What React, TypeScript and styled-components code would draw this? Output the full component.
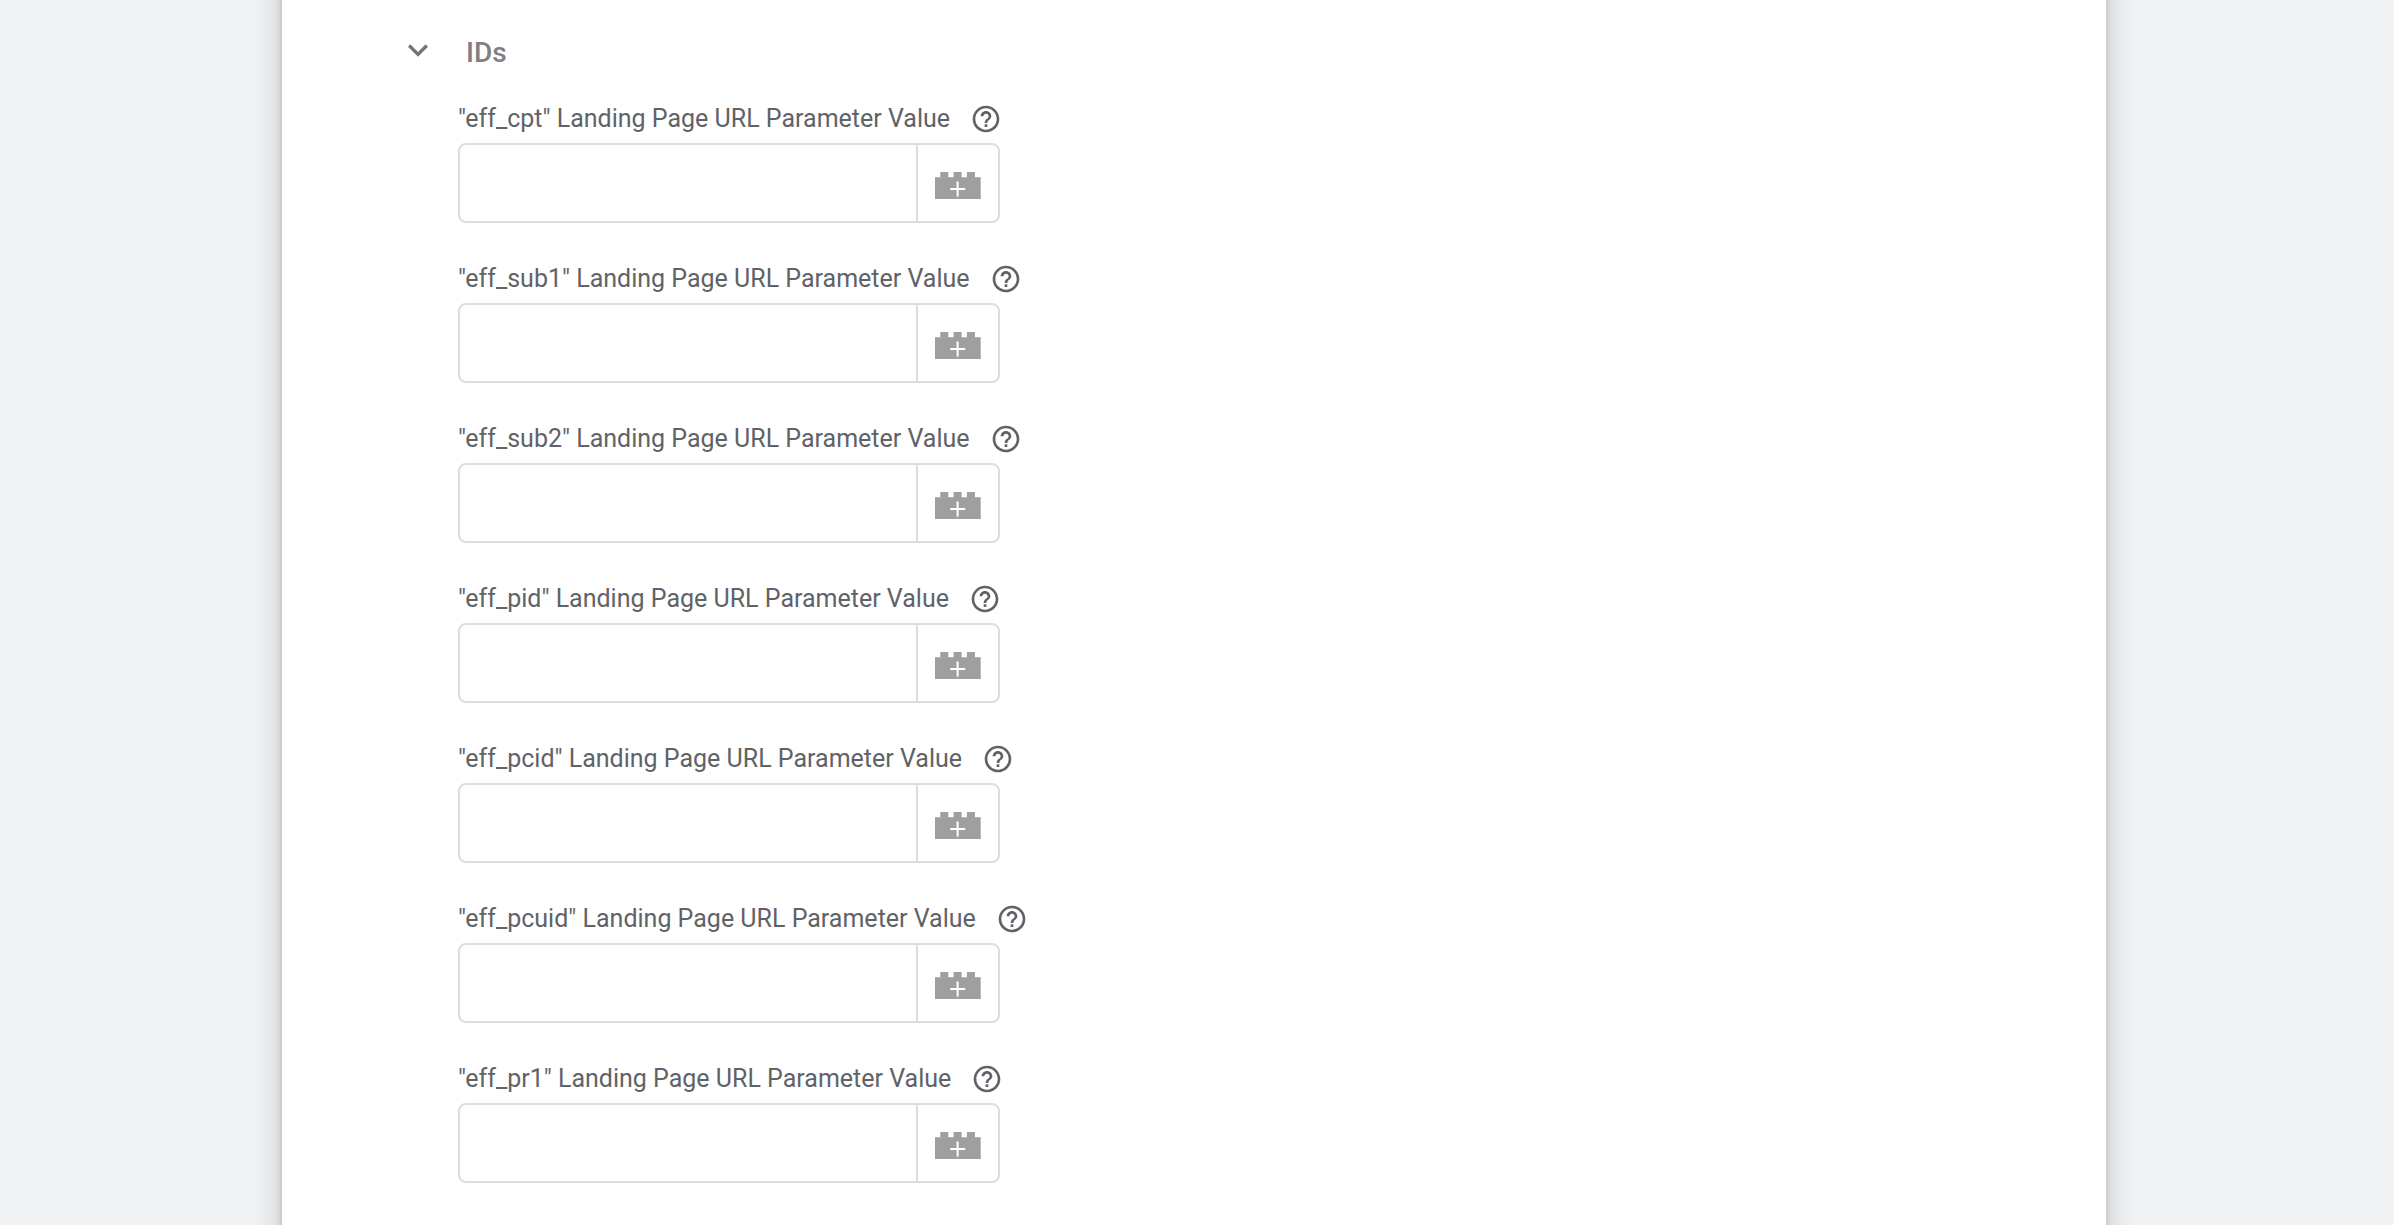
import React from "react";
import styled, { createGlobalStyle } from "styled-components";

const GlobalStyle = createGlobalStyle`
  *, *::before, *::after { box-sizing: border-box; }
  body {
    margin: 0;
    background: #f1f3f4;
    font-family: Roboto, "Liberation Sans", sans-serif;
    color: #5f6368;
  }
`;

const Page = styled.div`
  display: flex;
  min-height: 100vh;
  padding: 0 288px 0 282px;
  overflow: hidden;
`;

/* The panel runs past the top and bottom edges so its shadow stays even. */
const Panel = styled.main`
  flex: 1;
  min-width: 0;
  margin: -64px 0;
  padding: 97px 116px 104px;
  background: #fff;
  box-shadow: 0 0 6px rgba(0, 0, 0, 0.16), 0 0 32px rgba(0, 0, 0, 0.2);
`;

const SectionHeader = styled.header`
  display: flex;
  align-items: center;
  gap: 28px;
  height: 40px;
`;

const IconButton = styled.button`
  display: flex;
  align-items: center;
  justify-content: center;
  flex: none;
  padding: 0;
  border: 0;
  background: none;
  color: inherit;
  cursor: pointer;
`;

const CollapseButton = styled(IconButton)`
  color: #757575;
`;

const SectionTitle = styled.h2`
  margin: 0;
  font-size: 28px;
  line-height: 40px;
  font-weight: 500;
  color: #7f8083;
`;

const FieldList = styled.div`
  display: flex;
  flex-direction: column;
  gap: 40px;
  padding: 30px 0 0 60px;
`;

const Field = styled.div`
  display: flex;
  flex-direction: column;
  gap: 8px;
`;

const LabelRow = styled.div`
  display: flex;
  align-items: center;
  gap: 20px;
`;

const Label = styled.label`
  font-size: 25px;
  line-height: 32px;
`;

const InputGroup = styled.div`
  display: flex;
  width: 100%;
  max-width: 542px;
  height: 80px;
  border: 2px solid #dcdddf;
  border-radius: 8px;
  overflow: hidden;
`;

const TextInput = styled.input`
  flex: 1;
  min-width: 0;
  padding: 0 16px;
  border: 0;
  outline: 0;
  background: none;
  font: inherit;
  font-size: 25px;
`;

const VariableButton = styled(IconButton)`
  width: 82px;
  border-left: 2px solid #dcdddf;
`;

const ChevronIcon = () => (
  <svg width="40" height="40" viewBox="0 1.8 24 24" fill="currentColor" aria-hidden="true">
    <path d="M16.59 8.59 12 13.17 7.41 8.59 6 10l6 6 6-6z" />
  </svg>
);

const HelpIcon = () => (
  <svg width="32" height="32" viewBox="0 0 24 24" fill="currentColor" aria-hidden="true">
    <path d="M11 18h2v-2h-2v2zm1-16C6.48 2 2 6.48 2 12s4.48 10 10 10 10-4.48 10-10S17.52 2 12 2zm0 18c-4.41 0-8-3.59-8-8s3.59-8 8-8 8 3.59 8 8-3.59 8-8 8zm0-14c-2.21 0-4 1.79-4 4h2c0-1.1.9-2 2-2s2 .9 2 2c0 2-3 1.75-3 5h2c0-2.25 3-2.5 3-5 0-2.21-1.79-4-4-4z" />
  </svg>
);

const BrickIcon = () => (
  <svg width="46" height="32" viewBox="0 0 46 32" aria-hidden="true">
    <path
      fill="#9e9fa1"
      d="M0 10.3h5.3V5h8v5.3h5.3V5h8v5.3h5.3V5h8v5.3H45.7V32H0z"
    />
    <path fill="none" stroke="#fff" strokeWidth="2" d="M22.6 14.5v15M15.2 22h15" />
  </svg>
);

const parameters = [
  "eff_cpt",
  "eff_sub1",
  "eff_sub2",
  "eff_pid",
  "eff_pcid",
  "eff_pcuid",
  "eff_pr1",
];

const ParameterField = ({ name }: { name: string }) => (
  <Field>
    <LabelRow>
      <Label htmlFor={name}>"{name}" Landing Page URL Parameter Value</Label>
      <IconButton type="button" aria-label={`Help for ${name}`}>
        <HelpIcon />
      </IconButton>
    </LabelRow>
    <InputGroup>
      <TextInput id={name} type="text" />
      <VariableButton type="button" aria-label={`Choose a variable for ${name}`}>
        <BrickIcon />
      </VariableButton>
    </InputGroup>
  </Field>
);

export default function App() {
  return (
    <>
      <GlobalStyle />
      <Page>
        <Panel>
          <SectionHeader>
            <CollapseButton type="button" aria-label="Collapse IDs" aria-expanded="true">
              <ChevronIcon />
            </CollapseButton>
            <SectionTitle>IDs</SectionTitle>
          </SectionHeader>
          <FieldList>
            {parameters.map((name) => (
              <ParameterField key={name} name={name} />
            ))}
          </FieldList>
        </Panel>
      </Page>
    </>
  );
}
